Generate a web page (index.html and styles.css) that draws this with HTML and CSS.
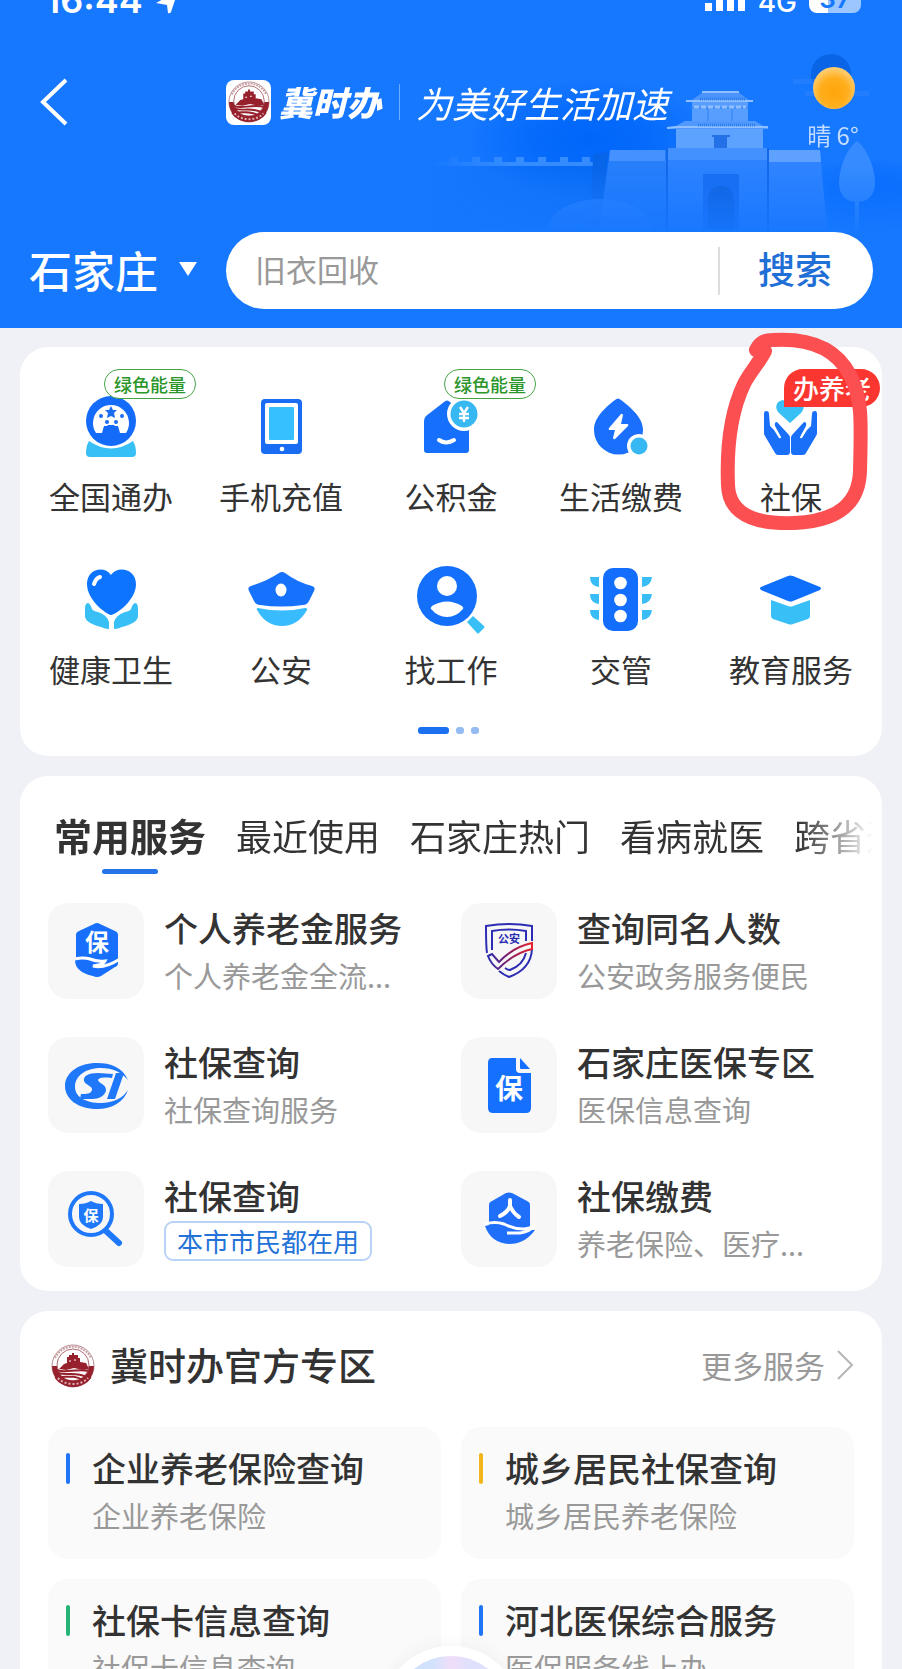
FILE: index.html
```html
<!DOCTYPE html>
<html lang="zh-CN">
<head>
    <meta charset="UTF-8">
    <meta name="viewport" content="width=device-width, initial-scale=1.0">
    <title>冀时办</title>
    <link rel="stylesheet" href="styles.css">
</head>
<body>

    <!-- Shared emblem -->
    <svg class="defs" aria-hidden="true">
        <symbol id="emblem" viewBox="0 0 44 44">
            <circle cx="22" cy="22" r="21" fill="#fff" stroke="#b98d92" stroke-width="1"/>
            <path d="M1 22a21 21 0 0 0 42 0z" fill="#96202c"/>
            <path d="M4 14A20 20 0 0 1 40 14" fill="none" stroke="#c9a0a4" stroke-width="2" stroke-dasharray="2 1"/>
            <circle cx="22" cy="21" r="16" fill="#fff" stroke="#b06a70" stroke-width="1"/>
            <path d="M8 25l5-5 3-1v-6h2v-2h3V9h2v2h4v3h2v4l6 1 3 6-6 1-9-2-8 2z" fill="#96202c"/>
            <path d="M18 17h2M23 16h2" stroke="#fff" stroke-width="1"/>
            <path d="M6 26c8 4 18-2 32 1M7 29c9 3 16-2 29 4M9 33c8 0 14-2 23 3" fill="none" stroke="#96202c" stroke-width="2"/>
            <path d="M6 32C13 42 31 42 38 32" fill="none" stroke="#96202c" stroke-width="6"/>
            <path d="M7 34C14 42 30 42 37 34" fill="none" stroke="#e0b5b9" stroke-width="2" stroke-dasharray="2 2"/>
        </symbol>
    </svg>

    <div class="app">

        <header class="header">
            <svg class="scenery" viewBox="0 0 472 180" aria-hidden="true">
                <defs>
                    <linearGradient id="fadeDown" x1="0" y1="0" x2="0" y2="1">
                        <stop offset="0" stop-color="#fff"/>
                        <stop offset=".65" stop-color="#fff"/>
                        <stop offset="1" stop-color="#fff" stop-opacity=".15"/>
                    </linearGradient>
                    <linearGradient id="fadeLeft">
                        <stop offset="0" stop-color="#4094ff" stop-opacity="0"/>
                        <stop offset=".5" stop-color="#4094ff" stop-opacity=".8"/>
                    </linearGradient>
                    <linearGradient id="wallFade">
                        <stop offset="0" stop-color="#0a6bf0" stop-opacity="0"/>
                        <stop offset="1" stop-color="#0a6bf0" stop-opacity=".6"/>
                    </linearGradient>
                    <radialGradient id="hill">
                        <stop offset="0" stop-color="#0066fa"/>
                        <stop offset=".5" stop-color="#0066fa" stop-opacity=".7"/>
                        <stop offset="1" stop-color="#0066fa" stop-opacity="0"/>
                    </radialGradient>
                    <mask id="sceneMask"><rect width="472" height="180" fill="url(#fadeDown)"/></mask>
                </defs>
                <g mask="url(#sceneMask)">
                    <ellipse cx="160" cy="90" rx="120" ry="60" fill="url(#hill)"/>
                    <ellipse cx="440" cy="145" rx="80" ry="36" fill="url(#hill)" opacity=".7"/>
                    <path d="M0 112h20v-5h8v5h14v-5h8v5h14v-5h8v5h14v-5h8v5h14v-5h8v5h14v-5h8v5h14v-5h8v5h3v4H0z" fill="url(#fadeLeft)"/>
                    <path d="M0 116h163l-3 64H0z" fill="url(#wallFade)"/>
                    <path d="M163 104l15-2-7 78h-11z" fill="#0862dc" opacity=".6"/>
                    <path d="M180 100h57v80h-68z" fill="#267efb"/>
                    <path d="M180 100h55v11h-56z" fill="#4591ff"/>
                    <path d="M338 100h52l7 80h-59z" fill="#2f83ff"/>
                    <path d="M338 100h52l1 12h-53z" fill="#5fa1ff"/>
                    <path d="M237 98h101v82H237z" fill="#2c82ff"/>
                    <path d="M237 98h101v12H237z" fill="#4291ff"/>
                    <path d="M237 98v82M338 98v82" stroke="#1268ec" stroke-width="2"/>
                    <path d="M273 124h36v56h-36z" fill="#1a6df0"/>
                    <path d="M278 180v-32q2-12 13-12t13 12v32z" fill="#1262dc"/>
                    <path d="M246 79h87v19h-87z" fill="#5ea2ff"/>
                    <path d="M282 85h18v2h-3v11h-13V87h-2z" fill="#2470e6"/>
                    <path d="M237 78l9-2 9-5h70l8 5 5 1v2H237z" fill="#5299ff"/>
                    <path d="M237 78l9-1h84l8 0" stroke="#8fbfff" stroke-width="2" fill="none"/>
                    <path d="M262 52h56v19h-56z" fill="#589eff"/>
                    <path d="M260 58h59M278 58v13M302 58v13" stroke="#2f80f2" stroke-width="1"/>
                    <path d="M264 57h52" stroke="#8fbfff" stroke-width="3" stroke-dasharray="5 2"/>
                    <path d="M255 52l7-2 11-8h35l11 8 5 2z" fill="#4b94fc"/>
                    <path d="M256 51h67M272 42h37" stroke="#8fbfff" stroke-width="2"/>
                    <path d="M270 49h46M268 75h58" stroke="#2f7eea" stroke-width="3" stroke-dasharray="1 1"/>
                    <ellipse cx="170" cy="180" rx="52" ry="31" fill="#3488ff" opacity=".7"/>
                    <path d="M427 91c10 7 18 27 18 42 0 12-7 19-18 19s-18-7-18-19c0-15 8-35 18-42z" fill="#358bff"/>
                    <path d="M427 140v40" stroke="#358bff" stroke-width="4"/>
                </g>
            </svg>

            <div class="status">
                <span class="time">16:44</span>
                <svg class="status-icon" width="24" height="24" viewBox="0 0 24 24" aria-hidden="true"><path d="M1 13L23 1 16 22q-1 2-3 1l-1-8z" fill="#fff"/></svg>
                <span class="status-right">
                    <svg width="42" height="26" viewBox="0 0 42 26" aria-hidden="true"><path d="M1 16h7v8H1zM12 11h7v13h-7zM23 6h7v18h-7zM34 0h7v24h-7z" fill="#fff"/></svg>
                    <span class="network">4G</span>
                    <span class="battery">37</span>
                </span>
            </div>

            <div class="nav">
                <div class="side">
                    <button class="back" aria-label="返回">
                        <svg width="44" height="48" viewBox="0 0 44 48"><path d="M37 2L14 24l23 22" fill="none" stroke="#fff" stroke-width="4"/></svg>
                    </button>
                </div>
                <div class="brand">
                    <span class="brand-logo"><svg width="42" height="42"><use href="#emblem"/></svg></span>
                    <span class="brand-name">冀时办</span>
                    <span class="brand-slogan">为美好生活加速</span>
                </div>
                <div class="weather">
                    <svg width="80" height="66" viewBox="0 0 80 66" aria-hidden="true">
                        <defs>
                            <radialGradient id="sun" cx=".5" cy=".6" r=".55">
                                <stop offset="0" stop-color="#ffa50a"/>
                                <stop offset=".6" stop-color="#ffae1c"/>
                                <stop offset="1" stop-color="#ffcb6b"/>
                            </radialGradient>
                        </defs>
                        <circle cx="38" cy="22" r="20" fill="#0965e6"/>
                        <path d="M0 27h22v5H0zM12 39h64v5H12z" fill="#3d8dff" opacity=".35"/>
                        <circle cx="41" cy="36" r="21" fill="url(#sun)"/>
                    </svg>
                    <span>晴 6°</span>
                </div>
            </div>

            <form class="search-row">
                <div class="side">
                    <button type="button" class="city">石家庄 <svg width="20" height="16" viewBox="0 0 20 16" aria-hidden="true"><path d="M1 1h18l-9 14z" fill="#fff"/></svg></button>
                </div>
                <div class="search-box">
                    <input type="search" aria-label="搜索服务" placeholder="旧衣回收">
                    <button type="button" class="search-btn">搜索</button>
                </div>
            </form>
        </header>

        <main>
            <!-- Main services -->
            <section class="card services">
                <div class="service-grid">
                    <a href="#" class="service">
                        <svg class="icon" viewBox="0 0 72 72">
                            <circle cx="36" cy="30" r="25" fill="#146bfa"/>
                            <path d="M21 42a18 18 0 1 1 30 0h-6l-2-7h-3l-1-1h-6l-1 1h-3l-2 7z" fill="#fff"/>
                            <path d="M36 15l2 4 4 0-3 3 1 5-4-2-4 2 1-5-3-3 4 0z" fill="#1a6df0"/>
                            <g fill="#1a6df0"><circle cx="26" cy="25" r="2"/><circle cx="47" cy="25" r="2"/><circle cx="32" cy="31" r="2"/><circle cx="41" cy="31" r="2"/></g>
                            <path d="M14 50q22 15 44 0 3 5 3 12 0 4-4 4H15q-4 0-4-4 0-7 3-12z" fill="#38bff5"/>
                        </svg>
                        <span>全国通办</span>
                        <em class="badge green">绿色能量</em>
                    </a>
                    <a href="#" class="service">
                        <svg class="icon" viewBox="0 0 72 72">
                            <rect x="16" y="8" width="41" height="55" rx="4" fill="#1a6cf2"/>
                            <rect x="20" y="12" width="33" height="41" rx="2" fill="#fff"/>
                            <rect x="24" y="16" width="25" height="33" rx="1" fill="#36c0ff"/>
                            <circle cx="37" cy="58" r="2.3" fill="#fff"/>
                        </svg>
                        <span>手机充值</span>
                    </a>
                    <a href="#" class="service">
                        <svg class="icon" viewBox="0 0 72 72">
                            <path d="M29 11q3-3 6 0l19 16v32q0 3-3 3H12q-3 0-3-3V30q0-3 2-5z" fill="#1670fb"/>
                            <path d="M24 49q7 5 15 0" fill="none" stroke="#fff" stroke-width="4" stroke-linecap="round"/>
                            <circle cx="49" cy="23" r="17" fill="#fff"/>
                            <circle cx="49" cy="23" r="13.5" fill="#38b8f2"/>
                            <path d="M45 16l4 6 4-6M44 23h10M44 27h10M49 22v9" fill="none" stroke="#fff" stroke-width="2.4"/>
                        </svg>
                        <span>公积金</span>
                        <em class="badge green">绿色能量</em>
                    </a>
                    <a href="#" class="service">
                        <svg class="icon" viewBox="0 0 72 72">
                            <path d="M30 9q3-3 6 0c9 7 22 17 22 30a24.500 24.500 0 0 1-49 0C9 26 21 16 30 9z" fill="#1a70fc"/>
                            <path d="M36 23L24 37q-1 2 1 2h5l-2 8q1 2 2 1l13-13q1-2-1-2h-6l2-9q-1-2-2-1z" fill="#fff"/>
                            <circle cx="54" cy="55" r="12" fill="#fff"/>
                            <circle cx="54" cy="55" r="8.500" fill="#38b8f2"/>
                        </svg>
                        <span>生活缴费</span>
                    </a>
                    <a href="#" class="service">
                        <svg class="icon" viewBox="0 0 72 72">
                            <path d="M35 32L24 22c-8-9 4-18 11-9 7-9 19 0 11 9z" fill="#38bff5"/>
                            <g id="palm" fill="#1a6ff8"><path d="M9 23q0-3 2-3 3 0 3 3l1 12 4 4 5 8q2 1 2-1l-6-11q-1-4 2-4l12 13q1 1 1 3v14q0 3-3 3h-9q-2 0-3-2L10 45q-1-1-1-3z"/></g>
                            <use href="#palm" transform="matrix(-1 0 0 1 71 0)"/>
                        </svg>
                        <span>社保</span>
                        <em class="badge red">办养老</em>
                        <!-- hand-drawn circle -->
                        <svg class="scribble" viewBox="0 0 160 210" aria-hidden="true"><path d="M42 25C46 17 52 15 58 15C88 13 120 19 136 50C149 74 147 100 146 146C145 176 127 196 80 198C52 199 15 195 14 160C12 110 20 80 30 59C36 47 45 38 51 26" fill="none" stroke="#fb4f52" stroke-width="14" stroke-linecap="round" stroke-linejoin="round"/></svg>
                    </a>
                    <a href="#" class="service">
                        <svg class="icon" viewBox="0 0 72 72">
                            <path d="M36 51C31 50 12 36 12 20 12 5 29 1 36 11 43 1 61 5 61 20 61 36 42 50 36 51z" fill="#0d74ff"/>
                            <path d="M19 20q2-6 6-7" fill="none" stroke="#fff" stroke-width="4" stroke-linecap="round"/>
                            <g id="leaf" fill="#38bff5"><path d="M10 45q0-6 3-6 2 0 4 6 1 2 6 3 9 3 11 10v7q-4 0-8-2-16-4-16-11z"/></g>
                            <use href="#leaf" transform="matrix(-1 0 0 1 73 0)"/>
                        </svg>
                        <span>健康卫生</span>
                    </a>
                    <a href="#" class="service">
                        <svg class="icon" viewBox="0 0 72 72">
                            <path d="M34 9q3-2 6 0 12 9 27 13 4 1 2 5l-5 10q-2 4-6 4-22 3-43 0-4 0-6-4L4 27q-2-4 2-5Q22 17 34 9z" fill="#1672fc"/>
                            <ellipse cx="36" cy="26" rx="5.500" ry="6.500" fill="#fff"/>
                            <path d="M13 44q24 5 47 0 3 0 2 2-9 16-25 16T12 46q-1-2 1-2z" fill="#38bbff"/>
                        </svg>
                        <span>公安</span>
                    </a>
                    <a href="#" class="service">
                        <svg class="icon" viewBox="0 0 72 72">
                            <circle cx="32" cy="32" r="30" fill="#1470fb"/>
                            <circle cx="32" cy="22" r="10" fill="#fff"/>
                            <path d="M16 45q-1-1 1-3 15-9 30 0 2 2 1 3-7 8-16 8t-16-8z" fill="#fff"/>
                            <path d="M52 58l6-6 11 10q1 1 0 2l-5 5q-1 1-2 0z" fill="#38bff5"/>
                        </svg>
                        <span>找工作</span>
                    </a>
                    <a href="#" class="service">
                        <svg class="icon" viewBox="0 0 72 72">
                            <rect x="18" y="4" width="35" height="63" rx="10" fill="#136dfd"/>
                            <g fill="#fff"><circle cx="35.500" cy="19" r="6.300"/><circle cx="35.500" cy="36" r="6.300"/><circle cx="35.500" cy="52" r="6.300"/></g>
                            <path d="M5 13h9v10Q5 22 5 13zM5 30h9v10Q5 39 5 30zM5 46h9v10Q5 55 5 46zM57 13h10q-1 9-10 10zM57 30h10q-1 9-10 10zM57 46h10q-1 9-10 10z" fill="#38bdf8"/>
                        </svg>
                        <span>交管</span>
                    </a>
                    <a href="#" class="service">
                        <svg class="icon" viewBox="0 0 72 72">
                            <path d="M16 36l17 6q3 1 5 0l17-6v16q0 2-2 3l-15 5q-2 1-5 0l-15-5q-2-1-2-3z" fill="#38bff5"/>
                            <path d="M33 12q2-1 5 0l27 11q2 1 0 3L38 37q-2 1-5 0L6 26q-2-2 0-3z" fill="#0f6ffd"/>
                        </svg>
                        <span>教育服务</span>
                    </a>
                </div>
                <div class="pager"><i class="on"></i><i></i><i></i></div>
            </section>

            <!-- Frequently used -->
            <section class="card common">
                <nav class="tabs">
                    <button class="tab active">常用服务</button>
                    <button class="tab">最近使用</button>
                    <button class="tab">石家庄热门</button>
                    <button class="tab">看病就医</button>
                    <button class="tab">跨省通办</button>
                </nav>
                <div class="common-grid">
                    <a href="#" class="common-item">
                        <svg class="tile" viewBox="0 0 96 96">
                            <path d="M46 21q3-2 6 0l15 7q3 1 3 4v28q0 3-3 4l-14 9q-4 2-8 0-18-4-18-16l1-3V32q0-3 3-4z" fill="#176ffb"/>
                            <text x="49" y="48" class="glyph g24">保</text>
                            <path d="M27 56q8-2 15 0 7 3 15 2-2 4-12 5 11 3 27-7" fill="none" stroke="#fff" stroke-width="3"/>
                        </svg>
                        <span class="info"><b>个人养老金服务</b><small>个人养老金全流...</small></span>
                    </a>
                    <a href="#" class="common-item">
                        <svg class="tile" viewBox="0 0 96 96">
                            <defs><linearGradient id="ribbon"><stop offset="0" stop-color="#2c2cb4"/><stop offset=".5" stop-color="#8a2060"/><stop offset="1" stop-color="#e8202a"/></linearGradient></defs>
                            <g fill="none" stroke="#2c2cb4" stroke-width="2">
                                <path d="M26 50c-1-6-1-17-1-27q23-4 46 0v15"/>
                                <path d="M31 47V28q17-3 34 0v10"/>
                                <path d="M38 68q5 4 10 6 22-8 23-28M44 65q3 2 5 2 13-5 16-17"/>
                            </g>
                            <path d="M27 53l4-2 7 8q14-15 33-19v6Q53 50 37 66q-7-5-10-13z" fill="none" stroke="url(#ribbon)" stroke-width="2"/>
                            <text x="48" y="40" class="glyph g11">公安</text>
                        </svg>
                        <span class="info"><b>查询同名人数</b><small>公安政务服务便民</small></span>
                    </a>
                    <a href="#" class="common-item">
                        <svg class="tile" viewBox="0 0 96 96">
                            <path d="M80 43C74 30 63 26 49 26 30 26 17 36 17 49s13 23 32 23c15 0 27-7 31-19-5 8-15 13-27 13-15 0-26-6-26-16 0-12 12-19 26-19 12 0 20 4 27 12z" fill="#1f78fa"/>
                            <path d="M65 37L50 36c-10 0-15 3-14 8 1 4 9 5 8 9-1 4-5 4-11 4l-1 5 12 0c9 0 14-5 14-9 0-6-8-7-8-10 1-2 4-3 14-2zM68 36h8l-9 26h-8z" fill="#1f78fa"/>
                        </svg>
                        <span class="info"><b>社保查询</b><small>社保查询服务</small></span>
                    </a>
                    <a href="#" class="common-item">
                        <svg class="tile" viewBox="0 0 96 96">
                            <path d="M31 21h24v11q0 4 4 4h11v35q0 5-5 5H32q-5 0-5-5V26q0-5 4-5z" fill="#1570ff"/>
                            <path d="M59 21l10 11H60q-1 0-1-1z" fill="#1570ff"/>
                            <text x="48" y="62" class="glyph g28">保</text>
                        </svg>
                        <span class="info"><b>石家庄医保专区</b><small>医保信息查询</small></span>
                    </a>
                    <a href="#" class="common-item">
                        <svg class="tile" viewBox="0 0 96 96">
                            <circle cx="43" cy="43" r="21" fill="none" stroke="#1f78fa" stroke-width="4"/>
                            <path d="M58 60l13 12" stroke="#1f78fa" stroke-width="6" stroke-linecap="round"/>
                            <path d="M31 33q7 0 12-3 5 3 12 3v13q0 8-12 12-12-4-12-12z" fill="#1f78fa"/>
                            <text x="43" y="50" class="glyph g15">保</text>
                        </svg>
                        <span class="info"><b>社保查询</b><span class="tag">本市市民都在用</span></span>
                    </a>
                    <a href="#" class="common-item">
                        <svg class="tile" viewBox="0 0 96 96">
                            <path d="M45 22q3-1 6 0l15 8q3 1 3 4v25h5Q64 73 48 73 30 72 24 55l4-1V34q0-3 3-4z" fill="#1f6ffb"/>
                            <path d="M49 29v7M49 35q-2 6-10 10M49 35q3 7 9 11" fill="none" stroke="#fff" stroke-width="4" stroke-linecap="round"/>
                            <path d="M24 53q10-3 19 0 10 5 19 5 6 0 13-4-7 7-16 8H46" fill="none" stroke="#fff" stroke-width="3"/>
                        </svg>
                        <span class="info"><b>社保缴费</b><small>养老保险、医疗...</small></span>
                    </a>
                </div>
            </section>

            <!-- Official zone -->
            <section class="card official">
                <div class="official-head">
                    <svg width="44" height="44" aria-hidden="true"><use href="#emblem"/></svg>
                    <h2>冀时办官方专区</h2>
                    <a href="#" class="more">更多服务 <svg width="18" height="30" viewBox="0 0 18 30" aria-hidden="true"><path d="M2 1l14 14L2 29" fill="none" stroke="#b5b5b5" stroke-width="2"/></svg></a>
                </div>
                <div class="official-grid">
                    <a href="#" class="panel blue"><span class="info"><b>企业养老保险查询</b><small>企业养老保险</small></span></a>
                    <a href="#" class="panel yellow"><span class="info"><b>城乡居民社保查询</b><small>城乡居民养老保险</small></span></a>
                    <a href="#" class="panel teal"><span class="info"><b>社保卡信息查询</b><small>社保卡信息查询</small></span></a>
                    <a href="#" class="panel blue"><span class="info"><b>河北医保综合服务</b><small>医保服务线上办</small></span></a>
                </div>
            </section>
        </main>

        <button class="assistant" aria-label="智能助手"></button>
    </div>

</body>
</html>
```
FILE: styles.css
```css
* {
    box-sizing: border-box;
}

body {
    margin: 0;
    font-family: "Noto Sans CJK SC", "Noto Sans", sans-serif;
    color: #333;
    background-color: #eff1f6;
}

a {
    color: inherit;
    text-decoration: none;
}

button {
    border: none;
    padding: 0;
    background: none;
    font-family: inherit;
    color: inherit;
    cursor: pointer;
}

svg {
    display: block;
}

.defs {
    position: absolute;
    width: 0;
    height: 0;
}

.app {
    position: relative;
    height: 100vh;
    overflow: hidden;
}

/* Header */
.header {
    position: relative;
    background-color: #1677ff;
    color: white;
    padding: 0 29px 19px;
}

.scenery {
    position: absolute;
    top: 50px;
    right: 0;
    width: 472px;
    height: 180px;
}

.status {
    position: relative;
    display: flex;
    align-items: flex-end;
    gap: 12px;
    height: 16px;
    padding: 0 12px 0 16px;
    overflow: hidden;
    font-family: Inter, sans-serif;
    font-weight: 600;
}

.time {
    font-size: 36px;
    line-height: 32px;
}

.status-icon {
    flex: none;
    margin-bottom: 2px;
}

.status-right {
    margin-left: auto;
    display: flex;
    align-items: flex-end;
    gap: 12px;
}

.status-right svg {
    margin-bottom: 3px;
}

.network {
    font-size: 28px;
    line-height: 28px;
    font-weight: 500;
}

.battery {
    width: 52px;
    height: 28px;
    margin-bottom: 3px;
    border-radius: 8px;
    background: linear-gradient(90deg, white 37%, #9cc6ff 37%);
    color: #1677ff;
    font-size: 26px;
    line-height: 28px;
    text-align: center;
}

.nav {
    position: relative;
    display: flex;
    align-items: center;
    height: 100px;
    margin-top: 36px;
}

.side {
    flex: 0 0 197px;
}

.back {
    display: block;
}

.brand {
    display: flex;
    flex: 1;
    align-items: center;
    white-space: nowrap;
}

.brand-logo {
    display: grid;
    place-items: center;
    width: 45px;
    height: 45px;
    border-radius: 8px;
    background-color: white;
}

.brand-name {
    margin: 0 18px 0 8px;
    font-size: 34px;
    line-height: 40px;
    font-weight: 900;
    font-style: italic;
}

.brand-slogan {
    border-left: 1px solid #6dabff;
    padding-left: 16px;
    font-size: 36px;
    line-height: 36px;
    font-style: italic;
}

.weather {
    flex: 0 0 80px;
    text-align: center;
    font-size: 24px;
    line-height: 34px;
    color: #c3dcff;
}

.search-row {
    position: relative;
    display: flex;
    align-items: center;
    margin-top: 80px;
}

.city {
    display: flex;
    align-items: center;
    gap: 20px;
    padding-bottom: 3px;
    font-size: 43px;
    line-height: 60px;
    font-weight: 500;
}

.search-box {
    flex: 1;
    display: flex;
    align-items: center;
    height: 77px;
    border-radius: 39px;
    background-color: white;
}

.search-box input {
    flex: 1;
    min-width: 0;
    border: none;
    outline: none;
    padding: 0 0 3px 29px;
    background: none;
    font-family: inherit;
    font-size: 31px;
    line-height: 46px;
}

.search-box input::placeholder {
    color: #999;
}

.search-btn {
    width: 155px;
    border-left: 2px solid #ddd;
    padding: 0 3px 5px 0;
    font-size: 37px;
    line-height: 43px;
    font-weight: 500;
    color: #1f6fd6;
}

/* Cards */
main {
    display: flex;
    flex-direction: column;
    gap: 20px;
    padding: 19px 20px;
}

.card {
    border-radius: 28px;
    background-color: white;
}

.services {
    padding: 44px 6px 22px;
}

.service-grid {
    display: grid;
    grid-template-columns: repeat(5, 1fr);
    row-gap: 45px;
}

.service {
    position: relative;
    display: flex;
    flex-direction: column;
    align-items: center;
    gap: 10px;
    font-size: 31px;
    line-height: 46px;
}

.icon {
    width: 72px;
    height: 72px;
}

.badge {
    position: absolute;
    top: -22px;
    left: 78px;
    font-style: normal;
    white-space: nowrap;
}

.badge.green {
    border: 1px solid #43a343;
    border-radius: 16px;
    padding: 0 9px;
    background-color: white;
    color: #2b962b;
    font-size: 18px;
    line-height: 28px;
    font-weight: 500;
}

.badge.red {
    border-radius: 19px 19px 19px 0;
    padding: 0 9px;
    background-color: #fb3530;
    color: white;
    font-size: 26px;
    line-height: 38px;
    font-weight: 500;
}

.scribble {
    position: absolute;
    top: -66px;
    left: 8px;
    width: 160px;
    height: 210px;
}

.pager {
    display: flex;
    justify-content: center;
    gap: 7px;
    margin-top: 35px;
    padding-right: 6px;
}

.pager i {
    width: 8px;
    height: 7px;
    border-radius: 3px;
    background-color: #95bbf3;
}

.pager .on {
    width: 31px;
    background-color: #1a70ee;
}

/* Tabs */
.common {
    padding: 31px 28px 24px;
}

.tabs {
    display: flex;
    align-items: flex-start;
    gap: 30px;
    margin-right: -19px;
    padding-left: 6px;
    overflow: hidden;
    -webkit-mask-image: linear-gradient(90deg, black 91%, transparent);
    mask-image: linear-gradient(90deg, black 91%, transparent);
}

.tab {
    flex: none;
    font-size: 36px;
    line-height: 56px;
}

.tab.active {
    font-size: 38px;
    font-weight: 700;
}

.tab.active::after {
    content: "";
    display: block;
    width: 56px;
    height: 5px;
    margin: 6px auto 0;
    border-radius: 3px;
    background-color: #2474e8;
}

.common-grid {
    display: grid;
    grid-template-columns: 1fr 1fr;
    gap: 38px 20px;
    margin-top: 29px;
}

.common-item {
    display: flex;
    gap: 20px;
}

.tile {
    flex: none;
    width: 96px;
    height: 96px;
    border-radius: 20px;
    background-color: #f7f7f7;
}

.glyph {
    fill: white;
    font-weight: 700;
    text-anchor: middle;
}

.g11 {
    fill: #2c2cb4;
    font-size: 11px;
}

.g15 {
    font-size: 15px;
}

.g24 {
    font-size: 24px;
}

.g28 {
    font-size: 28px;
}

.info {
    white-space: nowrap;
}

.info b {
    display: block;
    font-size: 34px;
    line-height: 50px;
    font-weight: 500;
}

.info small {
    display: block;
    font-size: 29px;
    line-height: 44px;
    color: #999;
}

.tag {
    display: block;
    border: 2px solid #b9d2f7;
    border-radius: 9px;
    padding: 0 11px;
    font-size: 26px;
    line-height: 36px;
    color: #2272d8;
}

/* Official zone */
.official {
    padding: 24px 28px 28px;
}

.official-head {
    display: flex;
    align-items: center;
    gap: 15px;
    padding-left: 3px;
}

.official-head h2 {
    margin: 0;
    padding-bottom: 4px;
    font-size: 38px;
    line-height: 58px;
    font-weight: 500;
}

.more {
    display: flex;
    align-items: center;
    gap: 11px;
    margin-left: auto;
    padding-bottom: 2px;
    font-size: 31px;
    line-height: 46px;
    color: #999;
}

.official-grid {
    display: grid;
    grid-template-columns: 1fr 1fr;
    gap: 20px;
    margin-top: 30px;
}

.panel {
    display: flex;
    gap: 22px;
    height: 132px;
    border-radius: 20px;
    padding: 16px 18px;
    background-color: #fafafa;
}

.panel::before {
    content: "";
    flex: none;
    width: 4px;
    height: 31px;
    margin-top: 10px;
    border-radius: 2px;
}

.panel.blue::before {
    background-color: #1f75f5;
}

.panel.yellow::before {
    background-color: #f3b51d;
}

.panel.teal::before {
    background-color: #26b476;
}

.assistant {
    position: absolute;
    bottom: -117px;
    left: calc(50% - 70px);
    width: 140px;
    height: 140px;
    border: 10px solid white;
    border-radius: 50%;
    background: linear-gradient(90deg, #d3e2fc 35%, #f0def9 50%, #dfe0fc 65%);
    box-shadow: 0 0 20px rgba(0, 0, 0, 0.05);
}
```
